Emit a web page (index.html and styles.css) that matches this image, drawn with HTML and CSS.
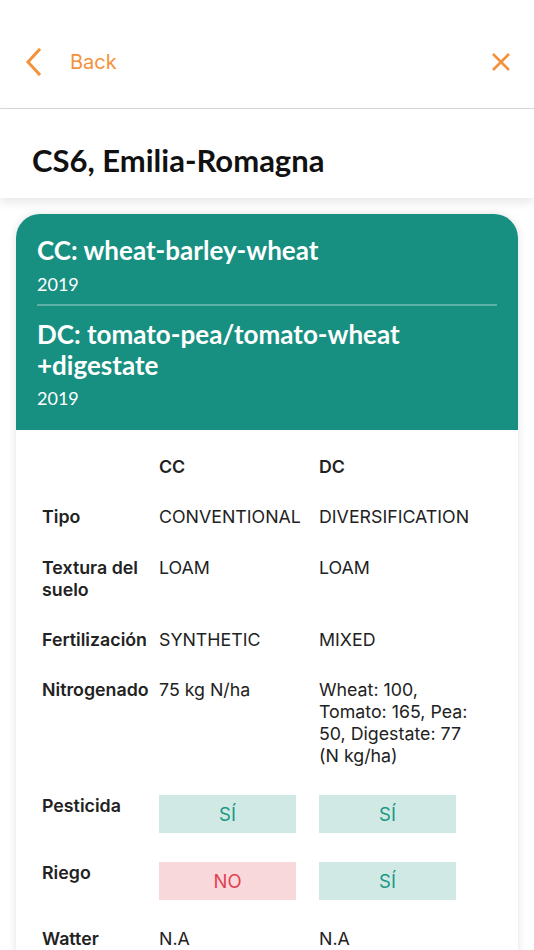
FILE: index.html
```html
<!DOCTYPE html>
<html lang="es">
<head>
<meta charset="utf-8">
<link rel="stylesheet" href="styles.css">
</head>
<body>
<header class="topbar">
  <a class="back">
    <svg class="chev" width="18" height="28" viewBox="0 0 18 28"><path d="M14 2 L3 14 L14 26" fill="none" stroke="#f4923b" stroke-width="3" stroke-linecap="square"/></svg>
    <span>Back</span>
  </a>
  <svg class="close" width="20" height="20" viewBox="0 0 20 20"><path d="M2 2 L18 18 M18 2 L2 18" fill="none" stroke="#f4923b" stroke-width="2.6"/></svg>
</header>
<section class="titlebar">
  <h1>CS6, Emilia-Romagna</h1>
</section>
<main class="content">
  <article class="card">
    <div class="card-head">
      <h2>CC: wheat-barley-wheat</h2>
      <div class="year">2019</div>
      <hr class="sep">
      <h2>DC: tomato-pea/tomato-wheat +digestate</h2>
      <div class="year">2019</div>
    </div>
    <div class="table">
      <div class="lbl"></div><div class="colh">CC</div><div class="colh">DC</div>
      <div class="lbl">Tipo</div><div class="val">CONVENTIONAL</div><div class="val">DIVERSIFICATION</div>
      <div class="lbl">Textura del suelo</div><div class="val">LOAM</div><div class="val">LOAM</div>
      <div class="lbl">Fertilización</div><div class="val">SYNTHETIC</div><div class="val">MIXED</div>
      <div class="lbl">Nitrogenado</div><div class="val">75 kg N/ha</div><div class="val">Wheat: 100, Tomato: 165, Pea: 50, Digestate: 77 (N kg/ha)</div>
      <div class="lbl">Pesticida</div><div class="val"><span class="badge yes">SÍ</span></div><div class="val"><span class="badge yes">SÍ</span></div>
      <div class="lbl">Riego</div><div class="val"><span class="badge no">NO</span></div><div class="val"><span class="badge yes">SÍ</span></div>
      <div class="lbl">Watter</div><div class="val">N.A</div><div class="val">N.A</div>
    </div>
  </article>
</main>
</body>
</html>
```
FILE: styles.css
```css
* { box-sizing: border-box; }
html, body { margin: 0; padding: 0; }
body {
  width: 534px;
  height: 950px;
  overflow: hidden;
  background: #ffffff;
  font-family: Inter, "Noto Sans", sans-serif;
}
.topbar {
  height: 109px;
  border-bottom: 1px solid #dcdcdc;
  display: flex;
  align-items: center;
  justify-content: space-between;
  padding: 16px 23px 0 25px;
  background: #fff;
}
.back {
  display: flex;
  align-items: center;
  gap: 27px;
  color: #f4923b;
  font-family: Inter, sans-serif;
  font-size: 20px;
}
.chev { display: block; }
.close { display: block; }
.titlebar {
  height: 89px;
  display: flex;
  align-items: center;
  padding: 12px 32px 0;
  background: #fff;
  box-shadow: 0 4px 10px rgba(0,0,0,0.10);
  position: relative;
  z-index: 1;
}
.titlebar h1 {
  margin: 0;
  font-family: Lato, sans-serif;
  font-weight: 700;
  font-size: 31px;
  color: #111;
}
.content {
  padding: 16px 16px 0;
}
.card {
  background: #fff;
  border-radius: 24px 24px 0 0;
  box-shadow: 0 0 8px rgba(0,0,0,0.12);
  overflow: hidden;
}
.card-head {
  background: #178f81;
  color: #fff;
  padding: 21px 21px 21px;
  font-family: Lato, sans-serif;
}
.card-head h2 {
  margin: 0;
  font-size: 26px;
  font-weight: 700;
  line-height: 31px;
}
.year {
  font-size: 18px;
  line-height: 22px;
  margin-top: 6.5px;
}
.sep {
  border: 0;
  height: 2px;
  background: rgba(255,255,255,0.3);
  margin: 9.5px 0 12.5px;
}
.table {
  display: grid;
  grid-template-columns: 117px 160px 160px;
  row-gap: 28.3px;
  padding: 26px 26px 40px;
  font-size: 17.8px;
  line-height: 22px;
  color: #222;
}
.lbl, .colh { font-weight: 600; }
.val { font-weight: 400; }
.badge {
  display: flex;
  width: 137px;
  height: 38px;
  align-items: center;
  justify-content: center;
  font-size: 18.5px;
}
.badge.yes { background: #d1e9e5; color: #1b9884; }
.badge.no { background: #f9d8dc; color: #e2404f; }
```
